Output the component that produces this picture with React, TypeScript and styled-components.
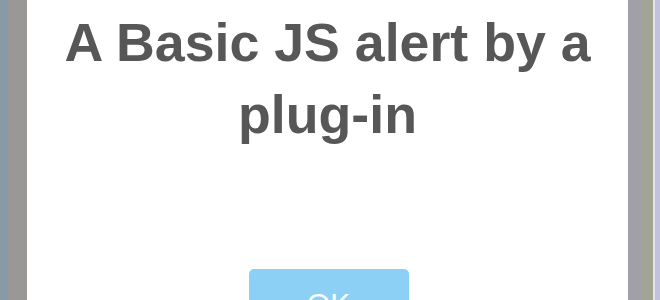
import React from "react";
import styled, { createGlobalStyle } from "styled-components";

const Global = createGlobalStyle`
  html, body { margin: 0; padding: 0; background: #ffffff; }
  body { width: 660px; height: 300px; overflow: hidden; }
`;

const Frame = styled.div`
  display: flex;
  width: 660px;
  height: 300px;
  overflow: hidden;
`;

const Strip = styled.div<{ $w: number; $c: string }>`
  flex: 0 0 ${(p) => p.$w}px;
  background: ${(p) => p.$c};
`;

const Modal = styled.div`
  flex: 1;
  background: #ffffff;
  display: flex;
  flex-direction: column;
  align-items: center;
  padding-top: 6px;
`;

const Title = styled.h2`
  margin: 0;
  width: 590px;
  text-align: center;
  font-family: "Liberation Sans", Arial, sans-serif;
  font-weight: 700;
  font-size: 53.7px;
  line-height: 72px;
  color: #575757;
`;

const Button = styled.button`
  margin-top: 119px;
  margin-left: 2px;
  flex: 0 0 auto;
  width: 160px;
  height: 70px;
  border: none;
  border-radius: 5px;
  background: #8cd0f6;
  color: #ffffff;
  font-family: "Liberation Sans", Arial, sans-serif;
  font-size: 30px;
  line-height: 70px;
  padding: 0;
`;

export default function App() {
  return (
    <>
      <Global />
      <Frame>
        <Strip $w={8} $c="#8a99a7" />
        <Strip $w={19} $c="#9a9797" />
        <Modal>
          <Title>A Basic JS alert by a plug-in</Title>
          <Button>OK</Button>
        </Modal>
        <Strip $w={13} $c="#a0a0a6" />
        <Strip $w={12} $c="#a2a596" />
        <Strip $w={2} $c="#e4e4ee" />
        <Strip $w={5} $c="#c2c2dc" />
      </Frame>
    </>
  );
}
